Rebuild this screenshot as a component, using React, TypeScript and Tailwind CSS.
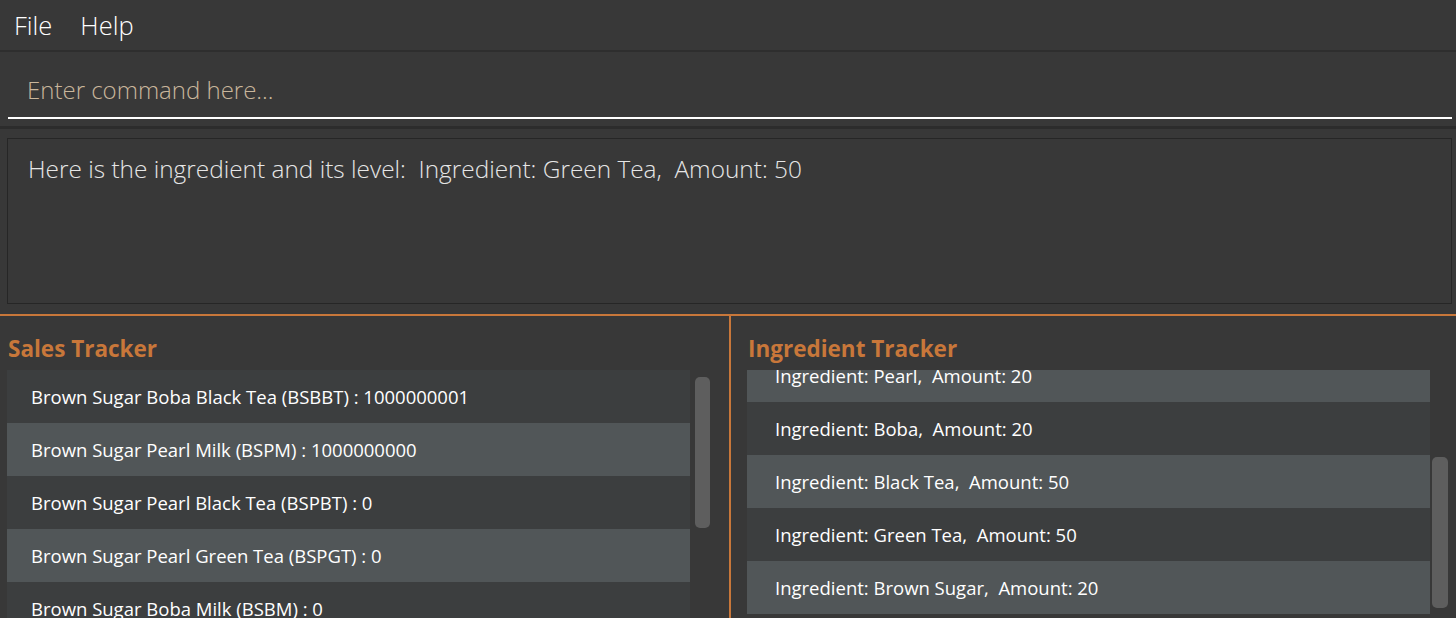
import { useState } from 'react';

const sales = [
    'Brown Sugar Boba Black Tea (BSBBT) : 1000000001',
    'Brown Sugar Pearl Milk (BSPM) : 1000000000',
    'Brown Sugar Pearl Black Tea (BSPBT) : 0',
    'Brown Sugar Pearl Green Tea (BSPGT) : 0',
    'Brown Sugar Boba Milk (BSBM) : 0',
];

const ingredients = [
    'Ingredient: Pearl,  Amount: 20',
    'Ingredient: Boba,  Amount: 20',
    'Ingredient: Black Tea,  Amount: 50',
    'Ingredient: Green Tea,  Amount: 50',
    'Ingredient: Brown Sugar,  Amount: 20',
];

function Row({ text, index, pad }: { text: string; index: number; pad: string }) {
    return (
        <div
            className={`h-[53px] shrink-0 flex items-center ${pad} text-[18.5px] text-white whitespace-pre ${
                index % 2 === 0 ? 'bg-[#3c3e3f]' : 'bg-[#515658]'
            }`}
        >
            {text}
        </div>
    );
}

export default function App() {
    const [command, setCommand] = useState('');

    return (
        <div className="h-[618px] w-[1456px] overflow-hidden bg-[#383838] flex flex-col font-['Open_Sans',sans-serif]">
            {/* Menu bar */}
            <div className="h-[52px] shrink-0 flex items-center gap-[28px] px-[14px] border-b-2 border-[#2e2e2e] text-[25.5px] font-light text-white">
                <span>File</span>
                <span>Help</span>
            </div>

            {/* Command box */}
            <div className="h-[77px] shrink-0 pl-[8px] pr-[4px] pt-[14px] border-b-[3px] border-[#2c2c2c]">
                <input
                    value={command}
                    onChange={(e) => setCommand(e.target.value)}
                    placeholder="Enter command here..."
                    className="w-full h-[53px] bg-transparent border-b-2 border-white px-[19px] pb-[4px] text-[24px] font-light text-white placeholder:text-[#c9b69c] outline-none"
                />
            </div>

            {/* Result display */}
            <div className="h-[185px] shrink-0 pl-[7px] pr-[4px] pt-[9px] pb-[10px]">
                <div className="h-full border border-[#262626] bg-[#383838] px-[20px] pt-[12px] text-[24.4px] font-light text-[#e6e6e6] whitespace-pre">
                    Here is the ingredient and its level:  Ingredient: Green Tea,  Amount: 50
                </div>
            </div>

            {/* Trackers */}
            <div className="flex-1 min-h-0 flex border-t-2 border-[#c8773a]">
                <div className="w-[731px] shrink-0 flex flex-col border-r-2 border-[#c8773a]">
                    <div className="h-[54px] shrink-0 flex items-end pb-[4px] pl-[8px] text-[22.5px] font-bold text-[#c8773a]">
                        Sales Tracker
                    </div>
                    <div className="flex-1 min-h-0 flex pl-[7px] pr-[19px]">
                        <div className="flex-1 overflow-hidden flex flex-col">
                            {sales.map((s, i) => (
                                <Row key={s} text={s} index={i} pad="pl-[24px]" />
                            ))}
                        </div>
                        <div className="w-[20px] shrink-0 flex justify-end pt-[7px]">
                            <div className="w-[15px] h-[151px] rounded-[5px] bg-[#5e5e5e]" />
                        </div>
                    </div>
                </div>
                <div className="flex-1 flex flex-col">
                    <div className="h-[54px] shrink-0 flex items-end pb-[4px] pl-[17px] text-[22.5px] font-bold text-[#c8773a]">
                        Ingredient Tracker
                    </div>
                    <div className="flex-1 min-h-0 flex pl-[16px] pr-[6px] pb-[4px]">
                        <div className="flex-1 overflow-hidden flex flex-col">
                            <div className="-mt-[21px] flex flex-col">
                                {ingredients.map((s, i) => (
                                    <Row key={s} text={s} index={i + 1} pad="pl-[28px]" />
                                ))}
                            </div>
                        </div>
                        <div className="w-[20px] shrink-0 flex justify-center pt-[87px]">
                            <div className="w-[16px] h-[151px] rounded-[5px] bg-[#5e5e5e]" />
                        </div>
                    </div>
                </div>
            </div>
        </div>
    );
}
